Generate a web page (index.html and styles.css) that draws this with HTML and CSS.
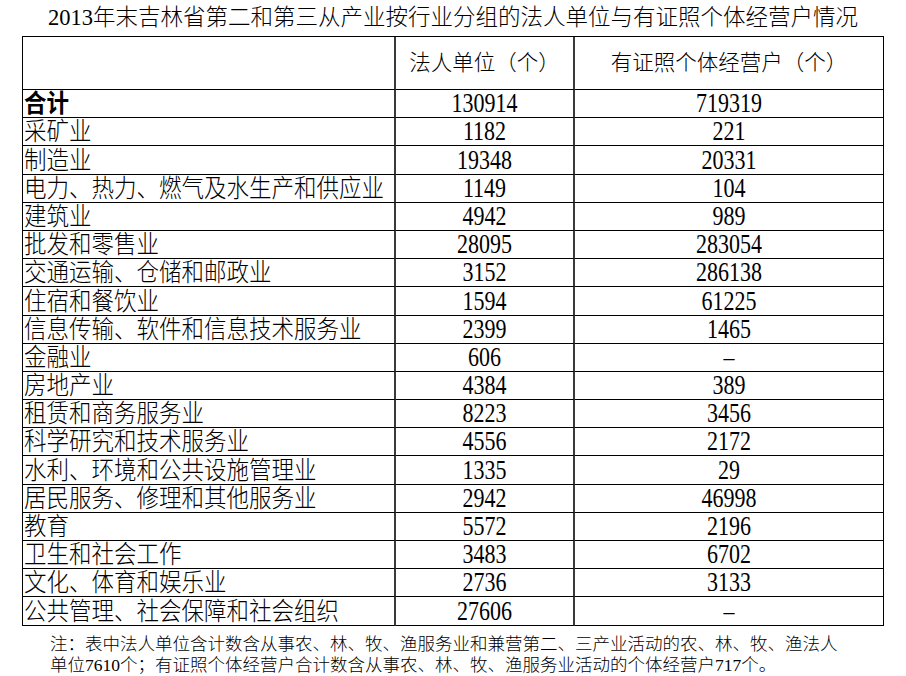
FILE: index.html
```html
<!DOCTYPE html>
<html lang="zh-CN">
<head>
<meta charset="utf-8">
<title>2013年末吉林省法人单位与有证照个体经营户情况</title>
<link rel="stylesheet" href="styles.css">
</head>
<body>
<div class="title">2013年末吉林省第二和第三从产业按行业分组的法人单位与有证照个体经营户情况</div>
<div class="grid">
  <div class="cell head label"></div>
  <div class="cell head mid">法人单位（个）</div>
  <div class="cell head last">有证照个体经营户（个）</div>

  <div class="cell label total"><span>合计</span></div>
  <div class="cell num mid"><span>130914</span></div>
  <div class="cell num last"><span>719319</span></div>

  <div class="cell label"><span>采矿业</span></div>
  <div class="cell num mid"><span>1182</span></div>
  <div class="cell num last"><span>221</span></div>

  <div class="cell label"><span>制造业</span></div>
  <div class="cell num mid"><span>19348</span></div>
  <div class="cell num last"><span>20331</span></div>

  <div class="cell label"><span>电力、热力、燃气及水生产和供应业</span></div>
  <div class="cell num mid"><span>1149</span></div>
  <div class="cell num last"><span>104</span></div>

  <div class="cell label"><span>建筑业</span></div>
  <div class="cell num mid"><span>4942</span></div>
  <div class="cell num last"><span>989</span></div>

  <div class="cell label"><span>批发和零售业</span></div>
  <div class="cell num mid"><span>28095</span></div>
  <div class="cell num last"><span>283054</span></div>

  <div class="cell label"><span>交通运输、仓储和邮政业</span></div>
  <div class="cell num mid"><span>3152</span></div>
  <div class="cell num last"><span>286138</span></div>

  <div class="cell label"><span>住宿和餐饮业</span></div>
  <div class="cell num mid"><span>1594</span></div>
  <div class="cell num last"><span>61225</span></div>

  <div class="cell label"><span>信息传输、软件和信息技术服务业</span></div>
  <div class="cell num mid"><span>2399</span></div>
  <div class="cell num last"><span>1465</span></div>

  <div class="cell label"><span>金融业</span></div>
  <div class="cell num mid"><span>606</span></div>
  <div class="cell num last"><span>–</span></div>

  <div class="cell label"><span>房地产业</span></div>
  <div class="cell num mid"><span>4384</span></div>
  <div class="cell num last"><span>389</span></div>

  <div class="cell label"><span>租赁和商务服务业</span></div>
  <div class="cell num mid"><span>8223</span></div>
  <div class="cell num last"><span>3456</span></div>

  <div class="cell label"><span>科学研究和技术服务业</span></div>
  <div class="cell num mid"><span>4556</span></div>
  <div class="cell num last"><span>2172</span></div>

  <div class="cell label"><span>水利、环境和公共设施管理业</span></div>
  <div class="cell num mid"><span>1335</span></div>
  <div class="cell num last"><span>29</span></div>

  <div class="cell label"><span>居民服务、修理和其他服务业</span></div>
  <div class="cell num mid"><span>2942</span></div>
  <div class="cell num last"><span>46998</span></div>

  <div class="cell label"><span>教育</span></div>
  <div class="cell num mid"><span>5572</span></div>
  <div class="cell num last"><span>2196</span></div>

  <div class="cell label"><span>卫生和社会工作</span></div>
  <div class="cell num mid"><span>3483</span></div>
  <div class="cell num last"><span>6702</span></div>

  <div class="cell label"><span>文化、体育和娱乐业</span></div>
  <div class="cell num mid"><span>2736</span></div>
  <div class="cell num last"><span>3133</span></div>

  <div class="cell label"><span>公共管理、社会保障和社会组织</span></div>
  <div class="cell num mid"><span>27606</span></div>
  <div class="cell num last"><span>–</span></div>
</div>
<p class="note">注：表中法人单位含计数含从事农、林、牧、渔服务业和兼营第二、三产业活动的农、林、牧、渔法人<br>单位7610个；有证照个体经营户合计数含从事农、林、牧、渔服务业活动的个体经营户717个。</p>
</body>
</html>
```
FILE: styles.css
```css
html, body {
  margin: 0;
  padding: 0;
  background: #fff;
}

body {
  font-family: "Liberation Serif", "Noto Sans CJK SC", serif;
  font-weight: 300;
  color: #000;
}

.title {
  height: 36px;
  line-height: 36px;
  text-align: center;
  font-size: 22.5px;
  white-space: nowrap;
}

.grid {
  display: grid;
  grid-template-columns: 373px 179px 309px;
  grid-template-rows: 53px repeat(19, 28.2px);
  width: 861px;
  margin-left: 22px;
  border-left: 1px solid #000;
  border-top: 1px solid #000;
}

.cell {
  display: flex;
  align-items: flex-end;
  border-bottom: 1px solid #000;
  border-right: 2px solid #3a3a3a;
  white-space: nowrap;
  box-sizing: border-box;
}

.cell.last {
  border-right: 1px solid #000;
}

.cell.head {
  align-items: center;
  justify-content: center;
  font-size: 21.5px;
  line-height: 26px;
}

.cell.label {
  padding-left: 1px;
  font-size: 22.5px;
  line-height: 25px;
}

.cell.label span {
  display: inline-block;
  transform: scaleY(1.1);
  transform-origin: bottom left;
}

.cell.total {
  font-weight: bold;
}

.cell.num {
  justify-content: center;
  font-size: 22px;
  line-height: 22px;
}

.cell.num span {
  display: inline-block;
  transform: scaleY(1.2);
  transform-origin: bottom center;
}

.note {
  margin: 8px 0 0 50px;
  font-size: 17.5px;
  line-height: 21px;
  white-space: nowrap;
}
```
